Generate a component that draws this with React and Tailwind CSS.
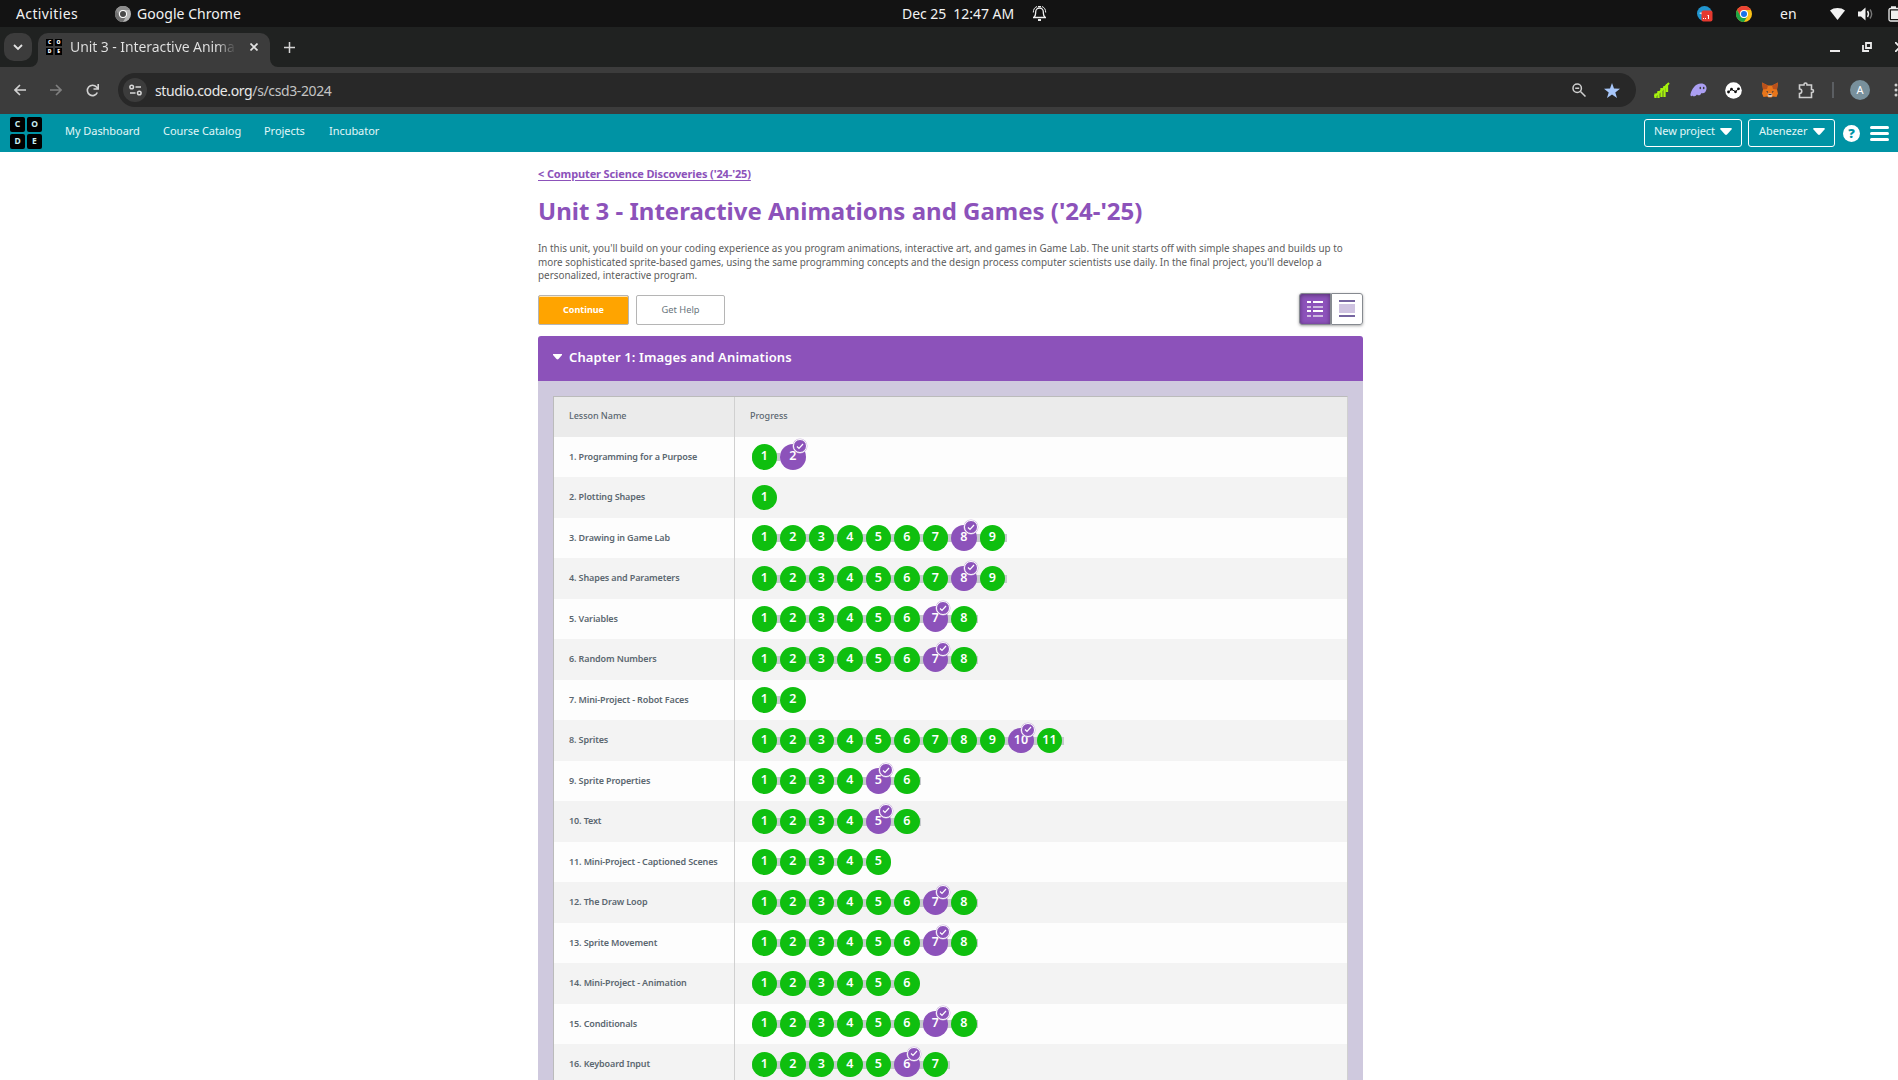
const BODY = "font-['Noto_Sans','Open_Sans',sans-serif]";

const lessons = [
  ['Programming for a Purpose', 2, 2, false],
  ['Plotting Shapes', 1, 0, false],
  ['Drawing in Game Lab', 9, 8, true],
  ['Shapes and Parameters', 9, 8, true],
  ['Variables', 8, 7, true],
  ['Random Numbers', 8, 7, true],
  ['Mini-Project - Robot Faces', 2, 0, false],
  ['Sprites', 11, 10, true],
  ['Sprite Properties', 6, 5, true],
  ['Text', 6, 5, true],
  ['Mini-Project - Captioned Scenes', 5, 0, false],
  ['The Draw Loop', 8, 7, true],
  ['Sprite Movement', 8, 7, true],
  ['Mini-Project - Animation', 6, 0, false],
  ['Conditionals', 8, 7, true],
  ['Keyboard Input', 7, 6, true],
];

function ChromeLogo({ mono }) {
  const c = mono ? ['#8d8d8d', '#b5b5b5', '#6f6f6f', '#4a4a4a'] : ['#ea4335', '#fbc116', '#1ea446', '#1a73e8'];
  return (
    <svg width="16" height="16" viewBox="0 0 48 48">
      <circle cx="24" cy="24" r="24" fill={c[1]} />
      <path d="M3.2 12A24 24 0 0 1 44.8 12H24A12 12 0 0 0 13.6 30Z" fill={c[0]} />
      <path d="M3.2 12A24 24 0 0 0 24 48L34.4 30A12 12 0 0 1 13.6 30Z" fill={c[2]} />
      <circle cx="24" cy="24" r="12" fill="#fff" />
      <circle cx="24" cy="24" r="9" fill={c[3]} />
    </svg>
  );
}

function SystemBar() {
  return (
    <div className="flex h-[27px] items-center bg-[#131313] text-[14px] leading-[27px] text-[#f2f2f2]">
      <span className="ml-4 w-[99px] tracking-[0.380px]">Activities</span>
      <ChromeLogo mono />
      <span className="ml-[6px] w-[765px] tracking-[0.040px]">Google Chrome</span>
      <span className="w-[130px] whitespace-pre tracking-[-0.050px]">Dec 25  12:47 AM</span>
      <svg width="15" height="17" viewBox="0 0 15 17" fill="none" stroke="#eee">
        <path d="M2 12.500C4 10.500 3.500 9 3.700 6.800a3.800 3.800 0 0 1 7.600 0c.2 2.200-.3 3.700 1.700 5.700" strokeWidth="1.300" />
        <path d="M1 12.500h13" strokeWidth="1.500" />
        <path d="M1.300 7.500C1.300 4.500 2.500 2.500 5 1.500M13.700 7.500C13.700 4.500 12.500 2.500 10 1.500M6 1.500h3" />
        <path d="M6 15h3" strokeWidth="2" />
      </svg>
      <div className="ml-auto flex h-full items-center">
        <svg width="16" height="16" viewBox="0 0 16 16">
          <circle cx="7.500" cy="7.500" r="7.500" fill="#2195cf" />
          <path d="M2 7l4-1v3z" fill="#fff" />
          <rect x="4.500" y="4.500" width="11" height="11" rx="2" fill="#e5392f" />
          <path d="M6 12.500h1M8 12.500h1M11.500 9v4M10.500 9.500h1" stroke="#fff" fill="none" />
        </svg>
        <span className="ml-[23px]"><ChromeLogo /></span>
        <span className="ml-7 w-[50px]">en</span>
        <svg width="15" height="12" viewBox="0 0 15 12"><path d="M0 2.500C4-.8 11-.8 15 2.500L7.500 12Z" fill="#f2f2f2" /></svg>
        <svg className="ml-[13px]" width="16" height="14" viewBox="0 0 16 14" fill="none">
          <path d="M0 4.500h3L7.500.5v13L3 9.500H0Z" fill="#f2f2f2" />
          <path d="M9.500 4q2 3 0 6" stroke="#eee" strokeWidth="1.400" />
          <path d="M12 2.500q3.300 4.500 0 9" stroke="#777" strokeWidth="1.400" />
        </svg>
        <svg className="ml-[14px]" width="10" height="16" viewBox="0 0 10 16">
          <path d="M3 1h5M10 2.500H2.500Q1 2.500 1 4v9.500Q1 15 2.500 15H10" fill="none" stroke="#eee" strokeWidth="1.300" />
          <rect x="3" y="4.500" width="7" height="8.500" fill="#eee" />
        </svg>
      </div>
    </div>
  );
}

function CodeLogo({ small }) {
  return (
    <div className="grid grid-cols-2 gap-[2px]">
      {['C', 'O', 'D', 'E'].map((l) => (
        <span
          key={l}
          className={
            small
              ? 'flex size-[7px] items-center justify-center bg-black text-[5px] leading-none font-black text-white'
              : 'flex size-[15px] items-center justify-center rounded-[2px] bg-black text-[8.500px] leading-none font-bold text-[#c9edf0]'
          }
        >
          {l}
        </span>
      ))}
    </div>
  );
}

function TabStrip() {
  return (
    <div className="flex h-10 bg-[#202221]">
      <div className="mt-[6px] ml-1 flex size-7 items-center justify-center rounded-[10px] bg-[#3c3c3c]">
        <svg width="10" height="7" viewBox="0 0 10 7"><path d="M1 1l4 4 4-4" fill="none" stroke="#e3e3e3" strokeWidth="1.800" /></svg>
      </div>
      <svg className="mt-auto -ml-[2px]" width="8" height="8" viewBox="0 0 8 8"><path d="M8 0A8 8 0 0 1 0 8H8Z" fill="#3c3c3c" /></svg>
      <div className="mt-[6px] flex w-[232px] items-center rounded-t-[10px] bg-[#3c3c3c] pb-[6px]">
        <span className="ml-2"><CodeLogo small /></span>
        <span className="-mt-[2px] ml-2 w-[170px] overflow-hidden bg-linear-to-r from-[#e3e3e3] from-86% to-[#3c3c3c] to-98% bg-clip-text text-[14px] tracking-[-0.080px] whitespace-nowrap text-transparent">
          Unit 3 - Interactive Anima
        </span>
        <svg className="ml-[10px]" width="8" height="8" viewBox="0 0 8 8"><path d="M.5.5l7 7M7.500.5l-7 7" stroke="#e3e3e3" strokeWidth="1.700" /></svg>
      </div>
      <svg className="mt-auto" width="8" height="8" viewBox="0 0 8 8"><path d="M0 0A8 8 0 0 0 8 8H0Z" fill="#3c3c3c" /></svg>
      <svg className="mt-[15px] ml-[6px]" width="11" height="11" viewBox="0 0 11 11"><path d="M5.500 0v11M0 5.500h11" stroke="#d5d5d5" strokeWidth="1.500" /></svg>
      <div className="ml-auto flex items-center">
        <span className="mt-[7px] h-[2px] w-[10px] bg-[#ececec]" />
        <svg className="ml-[22px]" width="10" height="10" viewBox="0 0 10 10" fill="none" stroke="#ececec" strokeWidth="1.800">
          <path d="M4 1h5v5H4ZM1 3v6h6" />
        </svg>
        <svg className="ml-[23px]" width="3" height="10" viewBox="0 0 3 10"><path d="M0 0l5 5-5 5" stroke="#ececec" strokeWidth="1.800" fill="none" /></svg>
      </div>
    </div>
  );
}

function AddressBar() {
  return (
    <div className="flex h-[47px] items-center bg-[#3c3c3c] pb-px">
      <svg className="ml-[14px]" width="12" height="12" viewBox="0 0 12 12"><path d="M12 6H1M6 1L1 6l5 5" fill="none" stroke="#d2d2d2" strokeWidth="1.600" /></svg>
      <svg className="ml-6" width="12" height="12" viewBox="0 0 12 12"><path d="M0 6h11M6 1l5 5-5 5" fill="none" stroke="#808080" strokeWidth="1.600" /></svg>
      <svg className="ml-6" width="13" height="13" viewBox="0 0 13 13"><path d="M11.300 8.500A5.200 5.200 0 1 1 10.500 3L12 4.500M12.200 0v5H7.500" fill="none" stroke="#d2d2d2" strokeWidth="1.600" /></svg>
      <div className="ml-[19px] flex h-[34px] w-[1518px] items-center rounded-full bg-[#282828]">
        <div className="ml-[5px] flex size-6 items-center justify-center rounded-full bg-[#3c3c3c]">
          <svg width="13" height="12" viewBox="0 0 13 12" fill="none" stroke="#d8d8d8" strokeWidth="1.500">
            <circle cx="2.700" cy="3" r="1.800" /><path d="M6.500 3H12M1 9h5.500" /><circle cx="10.300" cy="9" r="1.800" />
          </svg>
        </div>
        <span className="ml-2 text-[14px] tracking-[-0.380px] text-[#e8e8e8]">studio.code.org<span className="text-[#c4c4c4]">/s/csd3-2024</span></span>
        <svg className="ml-auto" width="14" height="14" viewBox="0 0 14 14" fill="none" stroke="#cfcfcf" strokeWidth="1.500">
          <circle cx="5.200" cy="5.200" r="4.200" /><path d="M8.500 8.500l5 5M3.200 5.200h4" />
        </svg>
        <svg className="mr-4 ml-[18px]" width="16" height="15" viewBox="0 0 16 15"><path d="M8 0l2 5.600 6 .2-4.700 3.600L13 15l-5-3.400L3 15l1.700-5.600L0 5.800l6-.2Z" fill="#a8c7fa" /></svg>
      </div>
      <svg className="ml-[18px]" width="16" height="16" viewBox="0 0 16 16" fill="none" stroke="#a6f20d">
        <path d="M1.500 11.500V16M4.500 9v7M7.500 6v9M10.500 4v11M13 2v8" strokeWidth="2.300" />
        <path d="M.5 14.500L8 8l7-7" strokeWidth="2" />
      </svg>
      <svg className="ml-5" width="17" height="14" viewBox="0 0 17 14">
        <path d="M.5 11C2 6 5 .5 11 .5c4 0 6 2.500 5.500 5.500-.5 3.500-3 5-5 4-1 2.500-3 3-4.500 1.500-1.500 2-4 2.500-4.500 1C1.500 14 0 13 .5 11Z" fill="#ab9ff2" />
        <ellipse cx="10.300" cy="5" rx=".8" ry="1.300" fill="#3c3c3c" /><ellipse cx="13.700" cy="5" rx=".8" ry="1.300" fill="#3c3c3c" />
      </svg>
      <svg className="ml-[18px]" width="17" height="17" viewBox="0 0 17 17">
        <circle cx="8.500" cy="8.500" r="8.300" fill="#fff" />
        <path d="M3.500 10L6.500 7.500l4 2 3.500-3" stroke="#111" strokeWidth="1" fill="none" />
        <g fill="#111"><circle cx="3.500" cy="10" r="1.400" /><circle cx="6.500" cy="7.200" r="1.400" /><circle cx="10.500" cy="9.800" r="1.400" /><circle cx="13.500" cy="6.800" r="1.400" /></g>
      </svg>
      <svg className="ml-5" width="16" height="16" viewBox="0 0 16 16">
        <path d="M0 .5l6 3h4l6-3-1 7 1 4-1.500 3.500-3.500-.5-1.500 1h-3l-1.500-1L1.500 15 0 11.500l1-4Z" fill="#e8761b" />
        <path d="M0 .5l6 3L5 7 1 7.500ZM16 .5l-6 3 1 3.500 4 .5Z" fill="#b9501c" />
        <path d="M5.500 13l1-1.500h3l1 1.500-1 2h-3Z" fill="#d9c5b5" />
        <path d="M4 9l2 .5V11ZM12 9l-2 .5V11ZM6.500 12h3v1h-3Z" fill="#2f3340" />
      </svg>
      <svg className="ml-5" width="17" height="17" viewBox="0 0 17 17" fill="none" stroke="#cfcfcf" strokeWidth="1.600">
        <path d="M1.500 3H6V2.500a1.500 1.500 0 0 1 3 0V3h4.500v4.500h.5a1.500 1.500 0 0 1 0 3h-.5V15.500h-12v-4a2.200 2.200 0 0 0 0-4.500Z" />
      </svg>
      <span className="ml-[17px] h-4 w-[2px] bg-[#5b5e62]" />
      <span className="ml-4 flex size-5 items-center justify-center rounded-full bg-[#78909c] text-[11px] text-white">A</span>
      <svg className="ml-auto" width="4" height="14" viewBox="0 0 4 14" fill="#cfcfcf"><circle cx="2" cy="2" r="1.500" /><circle cx="2" cy="7" r="1.500" /><circle cx="2" cy="12" r="1.500" /></svg>
    </div>
  );
}

function Caret() {
  return <svg width="12" height="7" viewBox="0 0 12 7"><path d="M1 0h10q1.400.3.500 1.500L7 6.500q-1 .9-2 0L.5 1.500Q-.4.300 1 0Z" fill="#fff" /></svg>;
}

function SiteHeader() {
  return (
    <header className="flex h-[38px] items-start bg-[#0093a4] text-[11px] text-[#e2f7f8]">
      <div className="mt-[3px] ml-[10px]"><CodeLogo /></div>
      <nav className="ml-[23px] flex pt-[9px] leading-4 tracking-[-0.050px] whitespace-nowrap">
        <span className="w-[98px]">My Dashboard</span>
        <span className="w-[101px]">Course Catalog</span>
        <span className="w-[65px]">Projects</span>
        <span>Incubator</span>
      </nav>
      <div className="mt-[5px] ml-auto flex items-center">
        <div className="flex h-7 w-[98px] items-center justify-between rounded-[3px] border border-white px-[9px] pb-[3px] tracking-[-0.100px] whitespace-nowrap">New project <Caret /></div>
        <div className="ml-[6px] flex h-7 w-[87px] items-center justify-between rounded-[3px] border border-white pr-[9px] pb-[3px] pl-[10px] tracking-[-0.050px]">Abenezer <Caret /></div>
        <span className="ml-2 flex size-[17px] items-center justify-center rounded-full bg-white text-[13px] leading-none font-black text-[#0093a4]">?</span>
        <div className="mr-[9px] ml-[10px] flex w-[19px] flex-col gap-[3px]">
          <span className="h-[3px] rounded-full bg-white" /><span className="h-[3px] rounded-full bg-white" /><span className="h-[3px] rounded-full bg-white" />
        </div>
      </div>
    </header>
  );
}

function Bubble({ n, assessed, connected, last }) {
  return (
    <div className={(connected ? 'bg-[#c6cacd]' : '') + ' ' + (last ? 'w-[27px]' : 'w-[28.500px]') + ' flex h-2 items-center'}>
      <div className={(assessed ? 'bg-[#8c52ba]' : 'bg-[#0fbf0f]') + ' relative flex size-[25.500px] shrink-0 items-center justify-center rounded-full pb-px text-[12.500px] font-semibold text-white'}>
        {n}
        {assessed && (
          <span className="absolute -top-[5px] -right-[1.500px] flex size-[14px] items-center justify-center rounded-full border border-white bg-[#8c52ba] shadow-[0_0_0_0.500px_#cdb6df]">
            <svg width="8" height="7" viewBox="0 0 8 7"><path d="M1 3.500l2 2 4-4.500" fill="none" stroke="#fff" strokeWidth="1.200" /></svg>
          </span>
        )}
      </div>
    </div>
  );
}

function LessonRow({ index, lesson }) {
  const [name, count, assessed, tail] = lesson;
  return (
    <div className={(index % 2 ? 'bg-[#f3f3f3]' : 'bg-[#fdfdfd]') + ' flex h-[40.500px]'}>
      <div className="flex w-[181px] shrink-0 items-center border-r border-[#d0d0d0] pb-[0.500px] pl-[15px] text-[9px] font-semibold tracking-[-0.130px] whitespace-nowrap text-[#5b6770]">
        {index + 1}. {name}
      </div>
      <div className="flex items-center pt-[0.500px] pl-[16.700px]">
        {Array.from({ length: count }, (_, i) => (
          <Bubble key={i} n={i + 1} assessed={assessed === i + 1} connected={i < count - 1 || tail} last={i === count - 1} />
        ))}
      </div>
    </div>
  );
}

function ViewToggle() {
  return (
    <div className="flex h-8 rounded-[3px] shadow-[0_1px_3px_rgba(0,0,0,0.350)]">
      <div className="flex w-8 items-center justify-center rounded-l-[3px] border border-[#868a90] bg-[#8c52ba] shadow-[inset_0_1px_4px_rgba(0,0,0,0.400)]">
        <svg width="16" height="16" viewBox="0 0 16 16">
          <path d="M0 0h4v2H0ZM6 0h10v2H6ZM0 9h4v2H0ZM6 9h10v2H6Z" fill="#fff" />
          <path d="M0 5h4v2H0ZM6 5h10v2H6ZM0 14h4v2H0ZM6 14h10v2H6Z" fill="#cdb9df" />
        </svg>
      </div>
      <div className="flex w-8 items-center justify-center rounded-r-[3px] border border-[#868a90] bg-white">
        <svg width="16" height="18" viewBox="0 0 16 18"><path d="M0 0h16v2H0ZM0 15h16v2H0Z" fill="#7665a0" /><path d="M0 4h16v9H0Z" fill="#cfc3e1" /></svg>
      </div>
    </div>
  );
}

export default function App() {
  return (
    <div className={BODY + ' h-[1080px] w-full overflow-hidden bg-white'}>
      <SystemBar />
      <TabStrip />
      <AddressBar />
      <SiteHeader />
      <main className="ml-[538px] w-[825px]">
        <div className="pt-[14px] text-[11px] leading-4 font-bold tracking-[-0.130px] text-[#8c52ba] underline underline-offset-2">&lt; Computer Science Discoveries ('24-'25)</div>
        <h1 className="mt-3 text-[24px] leading-[34px] font-bold whitespace-nowrap text-[#8c52ba]">Unit 3 - Interactive Animations and Games ('24-'25)</h1>
        <p className="mt-[14px] text-[9.900px] leading-[13.500px] whitespace-nowrap text-[#5c5c5c]">
          In this unit, you'll build on your coding experience as you program animations, interactive art, and games in Game Lab. The unit starts off with simple shapes and builds up to<br />
          more sophisticated sprite-based games, using the same programming concepts and the design process computer scientists use daily. In the final project, you'll develop a<br />
          personalized, interactive program.
        </p>
        <div className="mt-[10px] flex items-start text-[9px]">
          <div className="mt-[2px] flex h-[30px] w-[91px] items-center justify-center rounded-[2px] border border-[#b5b5b5] bg-[#ffa400] font-bold text-white shadow-[inset_0_1px_0_rgba(255,255,255,0.700)]">Continue</div>
          <div className="mt-[2px] ml-[7px] flex h-[30px] w-[89px] items-center justify-center rounded-[2px] border border-[#b5b5b5] bg-white text-[9.300px] text-[#6a757d]">Get Help</div>
          <div className="ml-auto"><ViewToggle /></div>
        </div>
        <section className="mt-[11px]">
          <div className="flex h-[45px] items-center rounded-t-[3px] bg-[#8c52ba] pl-[15px] text-[13px] font-semibold tracking-[0.120px] text-white">
            <svg className="-mt-[2px]" width="9" height="6" viewBox="0 0 9 6"><path d="M0 0h9v1L5.500 5q-1 .8-2 0L0 1Z" fill="#fff" /></svg>
            <span className="-mt-px ml-[7px]">Chapter 1: Images and Animations</span>
          </div>
          <div className="bg-[#cfc9de] p-[15px]">
            <div className="border border-[#bbbbbb] border-r-[#d0d0d0]">
              <div className="flex h-10 bg-[#ebebeb] text-[9px] font-medium text-[#5b6770]">
                <span className="flex w-[181px] items-center border-r border-[#d0d0d0] pb-px pl-[15px] tracking-[-0.050px]">Lesson Name</span>
                <span className="flex items-center pb-px pl-[15px]">Progress</span>
              </div>
              {lessons.map((l, i) => <LessonRow key={l[0]} index={i} lesson={l} />)}
            </div>
          </div>
        </section>
      </main>
    </div>
  );
}
